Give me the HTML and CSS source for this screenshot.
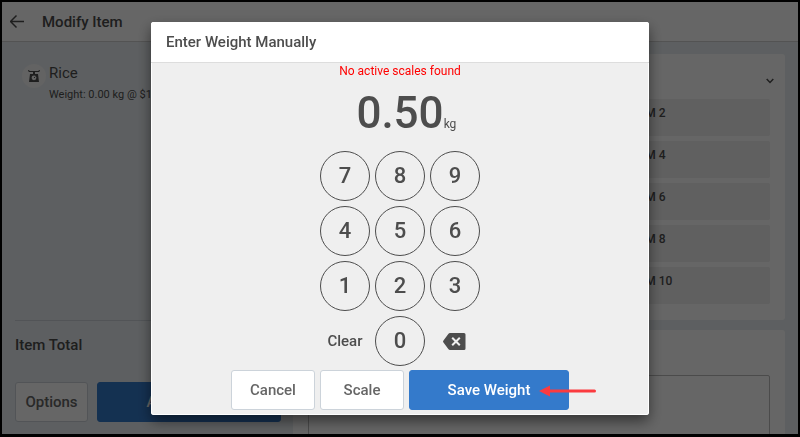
FILE: index.html
```html
<!DOCTYPE html>
<html lang="en">
<head>
  <meta charset="UTF-8">
  <meta name="viewport" content="width=device-width, initial-scale=1.0">
  <title>Modify Item</title>
  <link rel="stylesheet" href="styles.css">
</head>
<body>
  <div class="app">
    <header class="top-bar">
      <button class="icon-button" type="button" aria-label="Back">
        <svg width="16" height="16" viewBox="0 0 16 16" fill="none" stroke="currentColor" stroke-width="1.500">
          <path d="M14 7.500H1M6.500 1.500l-6 6 6 6" />
        </svg>
      </button>
      <h1>Modify Item</h1>
    </header>

    <main class="columns">
      <!-- Order item -->
      <section class="item-panel">
        <div class="item">
          <span class="item-icon">
            <svg width="12" height="12" viewBox="0 0 12 12">
              <path d="M0 0h1l.6 1h8.800L11 0h1l-.8 2H.8z" fill="currentColor" />
              <path d="M5 2h2v2h3l1 8H1l1-8h3z" fill="currentColor" />
              <circle cx="6" cy="7.800" r="2.400" fill="#f7f7f7" />
              <path d="M6 8l1.300-1.400" stroke="currentColor" />
            </svg>
          </span>
          <div>
            <h2>Rice</h2>
            <p>Weight: 0.00 kg @ $1</p>
          </div>
        </div>
        <div class="total">Item Total</div>
        <div class="item-actions">
          <button class="btn" type="button">Options</button>
          <button class="btn btn-primary" type="button">Add to Order</button>
        </div>
      </section>

      <!-- Modifiers -->
      <section class="side">
        <div class="card">
          <div class="card-head">
            <button class="icon-button" type="button" aria-label="Collapse">
              <svg width="8" height="6" viewBox="0 0 8 6" fill="none" stroke="currentColor" stroke-width="1.500">
                <path d="M.7 1L4 4.500 7.300 1" />
              </svg>
            </button>
          </div>
          <div class="modifiers">
            <button type="button">ITEM 2</button>
            <button type="button">ITEM 4</button>
            <button type="button">ITEM 6</button>
            <button type="button">ITEM 8</button>
            <button type="button">ITEM 10</button>
          </div>
        </div>
        <div class="card card-notes">
          <textarea aria-label="Notes"></textarea>
        </div>
      </section>
    </main>
  </div>

  <div class="overlay">
    <div class="modal" role="dialog" aria-labelledby="modal-title">
      <h2 class="modal-title" id="modal-title">Enter Weight Manually</h2>
      <p class="error">No active scales found</p>
      <div class="weight"><output>0.50</output><span>kg</span></div>

      <div class="keypad">
        <button class="key" type="button">7</button>
        <button class="key" type="button">8</button>
        <button class="key" type="button">9</button>
        <button class="key" type="button">4</button>
        <button class="key" type="button">5</button>
        <button class="key" type="button">6</button>
        <button class="key" type="button">1</button>
        <button class="key" type="button">2</button>
        <button class="key" type="button">3</button>
        <button class="key-plain" type="button">Clear</button>
        <button class="key" type="button">0</button>
        <button class="key-plain" type="button" aria-label="Delete">
          <svg width="24" height="17" viewBox="0 0 24 17">
            <path d="M7 0h14q1.500 0 1.500 1.500v14q0 1.500-1.500 1.500H7q-1 0-1.700-1L.3 9.300Q-.2 8.500.3 7.700L5.300 1Q6 0 7 0z" fill="currentColor" />
            <path d="M9.200 4.700l7.600 7.600M16.800 4.700l-7.600 7.600" stroke="#efefef" stroke-width="2" />
          </svg>
        </button>
      </div>

      <div class="modal-actions">
        <button class="btn" type="button">Cancel</button>
        <button class="btn" type="button">Scale</button>
        <button class="btn btn-primary" type="button">
          Save Weight
          <svg class="pointer" width="58" height="12" viewBox="0 0 58 12">
            <path d="M0 6L11 .5v11z" fill="#fb3b3f" />
            <path d="M10 6h45.500" stroke="#fb3b3f" stroke-width="3" stroke-linecap="round" />
          </svg>
        </button>
      </div>
    </div>
  </div>
</body>
</html>
```
FILE: styles.css
```css
:root {
  --text: #4d4d4d;
  --page: #e9eef2;
  --blue: #347acb;
  --border: #ccd3da;
}

* {
  box-sizing: border-box;
}

body {
  margin: 0;
  font-family: Roboto, sans-serif;
  font-size: 12px;
  line-height: 16px;
  color: var(--text);
}

h1,
h2,
p {
  margin: 0;
}

button {
  padding: 0;
  border: none;
  background: none;
  color: inherit;
  font: inherit;
  cursor: pointer;
}

.app {
  display: flex;
  flex-direction: column;
  height: 100vh;
  border: 2px solid #000;
  border-bottom-width: 3px;
  background: var(--page);
  overflow: hidden;
}

.top-bar {
  display: flex;
  align-items: center;
  gap: 16px;
  flex: none;
  height: 40px;
  padding: 0 8px;
  background: #fff;
  border-bottom: 1px solid #d0d0d0;
}

.top-bar h1 {
  font-size: 15px;
  font-weight: 500;
}

.icon-button {
  display: flex;
}

.columns {
  display: flex;
  flex: 1;
  min-height: 0;
}

/* Left side */
.item-panel {
  display: flex;
  flex-direction: column;
  width: 291px;
  padding: 22px 12px 12px 13px;
}

.item {
  display: flex;
  gap: 3px;
  flex: 1;
  padding-left: 7px;
}

.item-icon {
  display: flex;
  align-items: center;
  justify-content: center;
  width: 24px;
  height: 24px;
  border-radius: 50%;
  background: #f7f7f7;
}

.item h2 {
  font-size: 15px;
  font-weight: 400;
  line-height: 18px;
  margin-bottom: 5px;
}

.item p {
  font-size: 11px;
}

.total {
  height: 62px;
  padding-top: 16px;
  border-top: 1px solid var(--border);
  font-size: 15px;
  font-weight: 500;
}

.item-actions {
  display: flex;
  gap: 9px;
}

.item-actions .btn {
  width: 73px;
}

.item-actions .btn-primary {
  flex: 1;
}

.btn {
  height: 40px;
  border: 1px solid var(--border);
  border-radius: 3px;
  background: #fff;
  color: #666;
  font-size: 15px;
  font-weight: 500;
}

.btn-primary {
  border-color: var(--blue);
  background: var(--blue);
  color: #fff;
}

/* Right side */
.side {
  display: flex;
  flex-direction: column;
  gap: 10px;
  flex: 1;
  padding: 12px 13px 0 0;
}

.card {
  padding: 0 15px 16px;
  border-radius: 3px;
  background: #fff;
}

.card-head {
  display: flex;
  align-items: flex-end;
  justify-content: flex-end;
  height: 45px;
  padding: 0 0 15px;
  margin-right: -4px;
}

.modifiers {
  display: grid;
  gap: 5px;
}

.modifiers button {
  display: flex;
  height: 37px;
  padding: 6px 10px 0 320px;
  border-radius: 2px;
  background: #efefef;
  font-weight: 500;
}

.card-notes {
  flex: 1;
  padding: 45px 15px 0;
}

.card-notes textarea {
  display: block;
  width: 100%;
  height: 80px;
  border: 1px solid #bbb;
  border-radius: 2px;
  resize: none;
}

/* Weight dialog */
.overlay {
  position: fixed;
  inset: 0;
  display: flex;
  align-items: center;
  justify-content: center;
  background: rgba(0, 0, 0, 0.6);
}

.modal {
  display: flex;
  flex-direction: column;
  align-items: center;
  width: 90%;
  max-width: 498px;
  padding-bottom: 5px;
  border-radius: 3px;
  background: #efefef;
  box-shadow: inset 0 0 0 1px #fff, 0 6px 14px rgba(0, 0, 0, 0.5);
}

.modal-title {
  align-self: stretch;
  padding: 0 15px;
  border-bottom: 1px solid #ddd;
  border-radius: 3px 3px 0 0;
  background: #fff;
  font-size: 15px;
  font-weight: 500;
  line-height: 40px;
}

.error {
  color: #f00;
}

/* number stays centred, unit hangs to its right */
.weight {
  display: grid;
  grid-template-columns: 1fr auto 1fr;
  align-items: baseline;
  align-self: stretch;
  margin: 8px 0 12px;
}

.weight output {
  grid-column: 2;
  font-size: 44px;
  font-weight: 500;
  line-height: 52px;
}

.keypad {
  display: grid;
  grid-template-columns: repeat(3, 50px);
  gap: 5px;
}

.key {
  height: 50px;
  border: 1px solid var(--text);
  border-radius: 50%;
  font-size: 22px;
  font-weight: 500;
}

.key-plain {
  display: flex;
  align-items: center;
  justify-content: center;
  font-size: 15px;
  font-weight: 500;
}

.modal-actions {
  display: flex;
  gap: 5px;
  margin-top: 4px;
}

.modal-actions .btn {
  width: 84px;
}

.modal-actions .btn-primary {
  position: relative;
  width: 160px;
}

/* red arrow lies over the button edge */
.pointer {
  position: absolute;
  top: 14px;
  left: 129px;
}
```
